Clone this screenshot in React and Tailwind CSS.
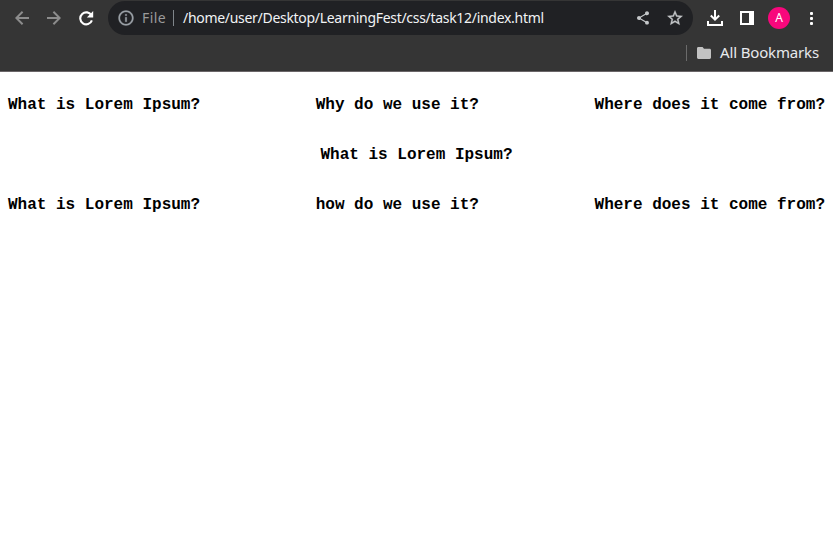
import React from 'react';
import { MdInfoOutline, MdShare, MdStarBorder } from 'react-icons/md';

function AddressBar() {
  return (
    <div className="ml-[14px] flex h-[34px] w-[585px] shrink-0 items-center rounded-full bg-[#202124] pl-[9px] pr-[9px]">
      <MdInfoOutline className="size-[18px] shrink-0 text-[#9aa0a6] [&>path:last-child]:stroke-current [&>path:last-child]:[stroke-width:0.4]" />
      <span className="ml-[7px] w-[24px] whitespace-nowrap text-[14px] leading-5 tracking-[0.4px] text-[#9a9a9a]">
        File
      </span>
      <span className="ml-[7px] h-4 w-px shrink-0 bg-[#80868b]" />
      <span className="ml-[9px] whitespace-nowrap text-[14px] leading-5 tracking-[-0.3px] text-[#f1f3f4]">
        /home/user/Desktop/LearningFest/css/task12/index.html
      </span>
      <span className="grow" />
      <MdShare className="size-4 shrink-0 text-[#c4c7c9]" />
      <MdStarBorder className="ml-[15px] size-[18px] shrink-0 text-[#c4c7c9] [&>path:last-child]:stroke-current [&>path:last-child]:[stroke-width:0.5]" />
    </div>
  );
}

function Toolbar() {
  return (
    <div className="flex h-9 items-center pl-[15px]">
      <svg className="size-[14px] shrink-0" viewBox="0 0 14 14" fill="none" stroke="#8c8c8c" strokeWidth="2">
        <path d="M14 7H1.5M7.6 0.7L1.3 7l6.3 6.3" />
      </svg>
      <svg className="ml-[18px] size-[14px] shrink-0" viewBox="0 0 14 14" fill="none" stroke="#8c8c8c" strokeWidth="2">
        <path d="M0 7h12.5M6.4 0.7L12.7 7l-6.3 6.3" />
      </svg>
      <svg className="ml-[18px] size-[15px] shrink-0" viewBox="0 0 15 15">
        <path d="M12.5 4.4A6 6 0 1 0 12.9 9.4" fill="none" stroke="white" strokeWidth="2.1" />
        <path d="M14.2 0v6.4H7.8z" fill="white" />
      </svg>
      <AddressBar />
      <svg className="ml-[14px] size-4 shrink-0" viewBox="0 0 16 16" fill="none" stroke="white" strokeWidth="2">
        <path d="M8 0v9M3.8 5.5L8 9.7l4.2-4.2M1 11v4h14v-4" />
      </svg>
      <svg className="ml-[17px] size-[14px] shrink-0" viewBox="0 0 14 14">
        <path fill="white" fillRule="evenodd" d="M0 0h14v14H0zM2 2v10h7V2z" />
      </svg>
      <span className="ml-[14px] flex size-[22px] shrink-0 items-center justify-center rounded-full bg-[#f8077c] text-[12px] leading-none text-white">
        A
      </span>
      <span className="ml-[20px] flex flex-col gap-[2px]">
        <span className="size-[3px] rounded-[1px] bg-white" />
        <span className="size-[3px] rounded-[1px] bg-white" />
        <span className="size-[3px] rounded-[1px] bg-white" />
      </span>
    </div>
  );
}

function BookmarksBar() {
  return (
    <div className="flex h-[34px] items-center justify-end pr-[14px]">
      <span className="h-4 w-px bg-[#6b6b6b]" />
      <svg className="ml-[10px] h-3 w-[14px]" viewBox="0 0 14 12">
        <path
          fill="#c2c2c2"
          d="M1.4 0h4.2L7 1.7h5.6c.8 0 1.4.6 1.4 1.4v7.5c0 .8-.6 1.4-1.4 1.4H1.4C.6 12 0 11.4 0 10.6V1.4C0 .6.6 0 1.4 0z"
        />
      </svg>
      <span className="ml-[9px] w-[99px] whitespace-nowrap pb-[3px] text-[15px] leading-5 tracking-[-0.15px] text-[#e8eaed]">
        All Bookmarks
      </span>
    </div>
  );
}

function HeadingRow({ items, centered = false }) {
  return (
    <div className={centered ? 'flex justify-center' : 'flex justify-between'}>
      {items.map((item) => (
        <h4 key={item} className="whitespace-nowrap text-base font-bold leading-[18px]">
          {item}
        </h4>
      ))}
    </div>
  );
}

export default function App() {
  return (
    <div className="flex h-[557px] w-[833px] flex-col overflow-hidden bg-white">
      <header className="h-[72px] shrink-0 border-b border-[#6a6668] bg-[#353535] font-['Noto_Sans',sans-serif]">
        <Toolbar />
        <BookmarksBar />
      </header>
      <main className="flex flex-col gap-8 px-2 pt-6 font-['Liberation_Mono',monospace] text-black">
        <HeadingRow items={['What is Lorem Ipsum?', 'Why do we use it?', 'Where does it come from?']} />
        <HeadingRow items={['What is Lorem Ipsum?']} centered />
        <HeadingRow items={['What is Lorem Ipsum?', 'how do we use it?', 'Where does it come from?']} />
      </main>
    </div>
  );
}
